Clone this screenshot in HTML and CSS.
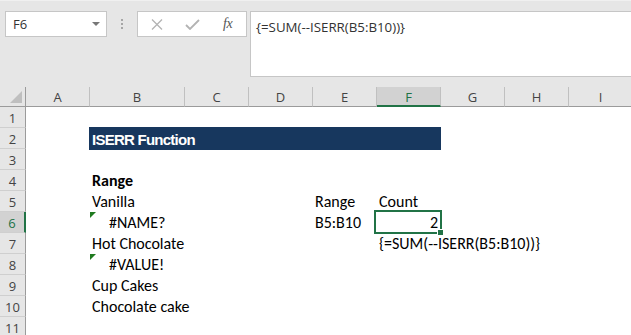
FILE: index.html
```html
<!DOCTYPE html>
<html>
<head>
<meta charset="utf-8">
<link rel="stylesheet" href="styles.css">
</head>
<body>
<div class="app">
  <div class="toolbar">
    <div class="namebox">
      <span class="name">F6</span>
      <svg class="caret" width="8" height="4" viewBox="0 0 8 4"><path d="M0 0H8L4 4Z" fill="#777"/></svg>
    </div>
    <div class="grip"><span></span><span></span><span></span></div>
    <div class="btns">
      <svg class="ico" width="12" height="11" viewBox="0 0 12 11"><path d="M1 0.5L11 10.5M11 0.5L1 10.5" stroke="#b3b3b3" stroke-width="1.3" fill="none"/></svg>
      <svg class="ico" width="15" height="11" viewBox="0 0 15 11"><path d="M1 6L5 10L14 1" stroke="#b3b3b3" stroke-width="1.8" fill="none"/></svg>
      <span class="fx">fx</span>
    </div>
    <div class="formula">{=SUM(--ISERR(B5:B10))}</div>
  </div>

  <div class="sheet">
    <div class="corner"><span class="tri"></span></div>
    <div class="ch">A</div>
    <div class="ch">B</div>
    <div class="ch">C</div>
    <div class="ch">D</div>
    <div class="ch">E</div>
    <div class="ch ch-sel">F</div>
    <div class="ch">G</div>
    <div class="ch">H</div>
    <div class="ch">I</div>

    <div class="rh">1</div><div class="c s9"></div>

    <div class="rh">2</div><div class="c"></div><div class="c band s5">ISERR Function</div><div class="c s3"></div>

    <div class="rh">3</div><div class="c s9"></div>

    <div class="rh">4</div><div class="c"></div><div class="c b">Range</div><div class="c s7"></div>

    <div class="rh">5</div><div class="c"></div><div class="c">Vanilla</div><div class="c s2"></div><div class="c">Range</div><div class="c">Count</div><div class="c s3"></div>

    <div class="rh rh-sel">6</div><div class="c"></div><div class="c err">#NAME?</div><div class="c s2"></div><div class="c">B5:B10</div><div class="c num sel">2<span class="handle"></span></div><div class="c s3"></div>

    <div class="rh">7</div><div class="c"></div><div class="c">Hot Chocolate</div><div class="c s3"></div><div class="c over">{=SUM(--ISERR(B5:B10))}</div><div class="c s3"></div>

    <div class="rh">8</div><div class="c"></div><div class="c err">#VALUE!</div><div class="c s7"></div>

    <div class="rh">9</div><div class="c"></div><div class="c">Cup Cakes</div><div class="c s7"></div>

    <div class="rh">10</div><div class="c"></div><div class="c">Chocolate cake</div><div class="c s7"></div>

    <div class="rh">11</div><div class="c s9"></div>
  </div>
</div>
</body>
</html>
```

FILE: styles.css
```css
html, body {
  margin: 0;
  padding: 0;
}
body {
  width: 631px;
  height: 335px;
  overflow: hidden;
  background: #e6e6e6;
}
.app {
  width: 631px;
  height: 335px;
  overflow: hidden;
}

/* ---------- formula bar ---------- */
.toolbar {
  height: 87px;
  display: flex;
  align-items: flex-start;
  padding: 11px 0 0 5px;
  box-sizing: border-box;
  border-top: 1px solid #f0f0f0;
}
.namebox {
  width: 102px;
  height: 26px;
  box-sizing: border-box;
  margin-top: -1px;
  background: #fff;
  border: 1px solid #c6c6c6;
  display: flex;
  align-items: center;
  justify-content: space-between;
  padding: 0 6px 0 7px;
  font-family: "Open Sans", "Noto Sans", sans-serif;
  font-size: 13px;
  color: #333;
}
.grip {
  width: 30px;
  display: flex;
  flex-direction: column;
  align-items: center;
  gap: 2px;
  padding-top: 7px;
}
.grip span {
  width: 2px;
  height: 2px;
  background: #a6a6a6;
}
.btns {
  width: 110px;
  height: 26px;
  margin-top: -1px;
  box-sizing: border-box;
  background: #fff;
  border: 1px solid #c6c6c6;
  display: flex;
  align-items: center;
  padding-left: 13px;
  gap: 22px;
}
.fx {
  font-family: "Liberation Serif", serif;
  font-style: italic;
  font-size: 14px;
  color: #555;
  margin-left: 1px;
  letter-spacing: -0.5px;
}
.formula {
  flex: 1;
  margin-left: 3px;
  height: 66px;
  margin-top: -1px;
  box-sizing: border-box;
  background: #fff;
  border: 1px solid #c6c6c6;
  border-right: none;
  padding: 6px 0 0 5px;
  font-family: "Open Sans", "Noto Sans", sans-serif;
  font-size: 13.3px;
  color: #333;
}

/* ---------- sheet ---------- */
.sheet {
  display: grid;
  grid-template-columns: 26px 64px 95px 64px 64px 64px 64px 64px 64px 64px;
  grid-template-rows: 20px repeat(11, 21px);
  background: #fff;
  width: 633px;
}
.corner {
  background: #e6e6e6;
  border-right: 1px solid #9b9b9b;
  border-bottom: 1px solid #9b9b9b;
  position: relative;
}
.tri {
  position: absolute;
  right: 3px;
  bottom: 3px;
  width: 0;
  height: 0;
  border-left: 12px solid transparent;
  border-bottom: 12px solid #bfbfbf;
}
.ch {
  background: #e6e6e6;
  border-right: 1px solid #c0c0c0;
  border-bottom: 1px solid #9b9b9b;
  font-family: "Open Sans", "Noto Sans", sans-serif;
  font-size: 13px;
  color: #444;
  display: flex;
  align-items: center;
  justify-content: center;
  padding-top: 1px;
  box-sizing: border-box;
}
.ch-sel {
  background: #d2d2d2;
  border-bottom: 2px solid #217346;
  color: #217346;
}
.rh {
  background: #e6e6e6;
  border-right: 1px solid #9b9b9b;
  border-bottom: 1px solid #cfcfcf;
  font-family: "Open Sans", "Noto Sans", sans-serif;
  font-size: 13px;
  color: #444;
  display: flex;
  align-items: center;
  justify-content: center;
  padding-top: 1px;
  box-sizing: border-box;
}
.rh-sel {
  background: #d2d2d2;
  border-right: 2px solid #217346;
  color: #217346;
}
.c {
  font-family: "Carlito", "Lato", sans-serif;
  font-size: 16px;
  color: #000;
  line-height: 19px;
  padding: 1px 0 0 2px;
  white-space: nowrap;
  box-sizing: border-box;
  min-width: 0;
}
.s2 { grid-column: span 2; }
.s3 { grid-column: span 3; }
.s5 { grid-column: span 5; }
.s7 { grid-column: span 7; }
.s9 { grid-column: span 9; }
.b { font-weight: bold; }
.band {
  background: #17375e;
  color: #fff;
  font-family: "Liberation Sans", Arial, sans-serif;
  font-weight: bold;
  font-size: 15px;
  letter-spacing: -0.75px;
  margin: -1px 0 -1px -1px;
  padding: 3px 0 0 3px;
}
.err {
  padding-left: 19px;
  position: relative;
}
.err::before {
  content: "";
  position: absolute;
  left: 0;
  top: 0;
  border-top: 6px solid #1f7a1f;
  border-right: 6px solid transparent;
}
.num {
  text-align: right;
  padding-right: 3px;
}
.sel {
  position: relative;
}
.sel::after {
  content: "";
  position: absolute;
  left: -3px;
  top: -2px;
  right: -1px;
  bottom: -1px;
  border: 2px solid #217346;
}
.handle {
  position: absolute;
  right: -3px;
  bottom: -3px;
  width: 5px;
  height: 5px;
  background: #217346;
  border: 1px solid #fff;
  z-index: 2;
}
.over {
  overflow: visible;
}
```
